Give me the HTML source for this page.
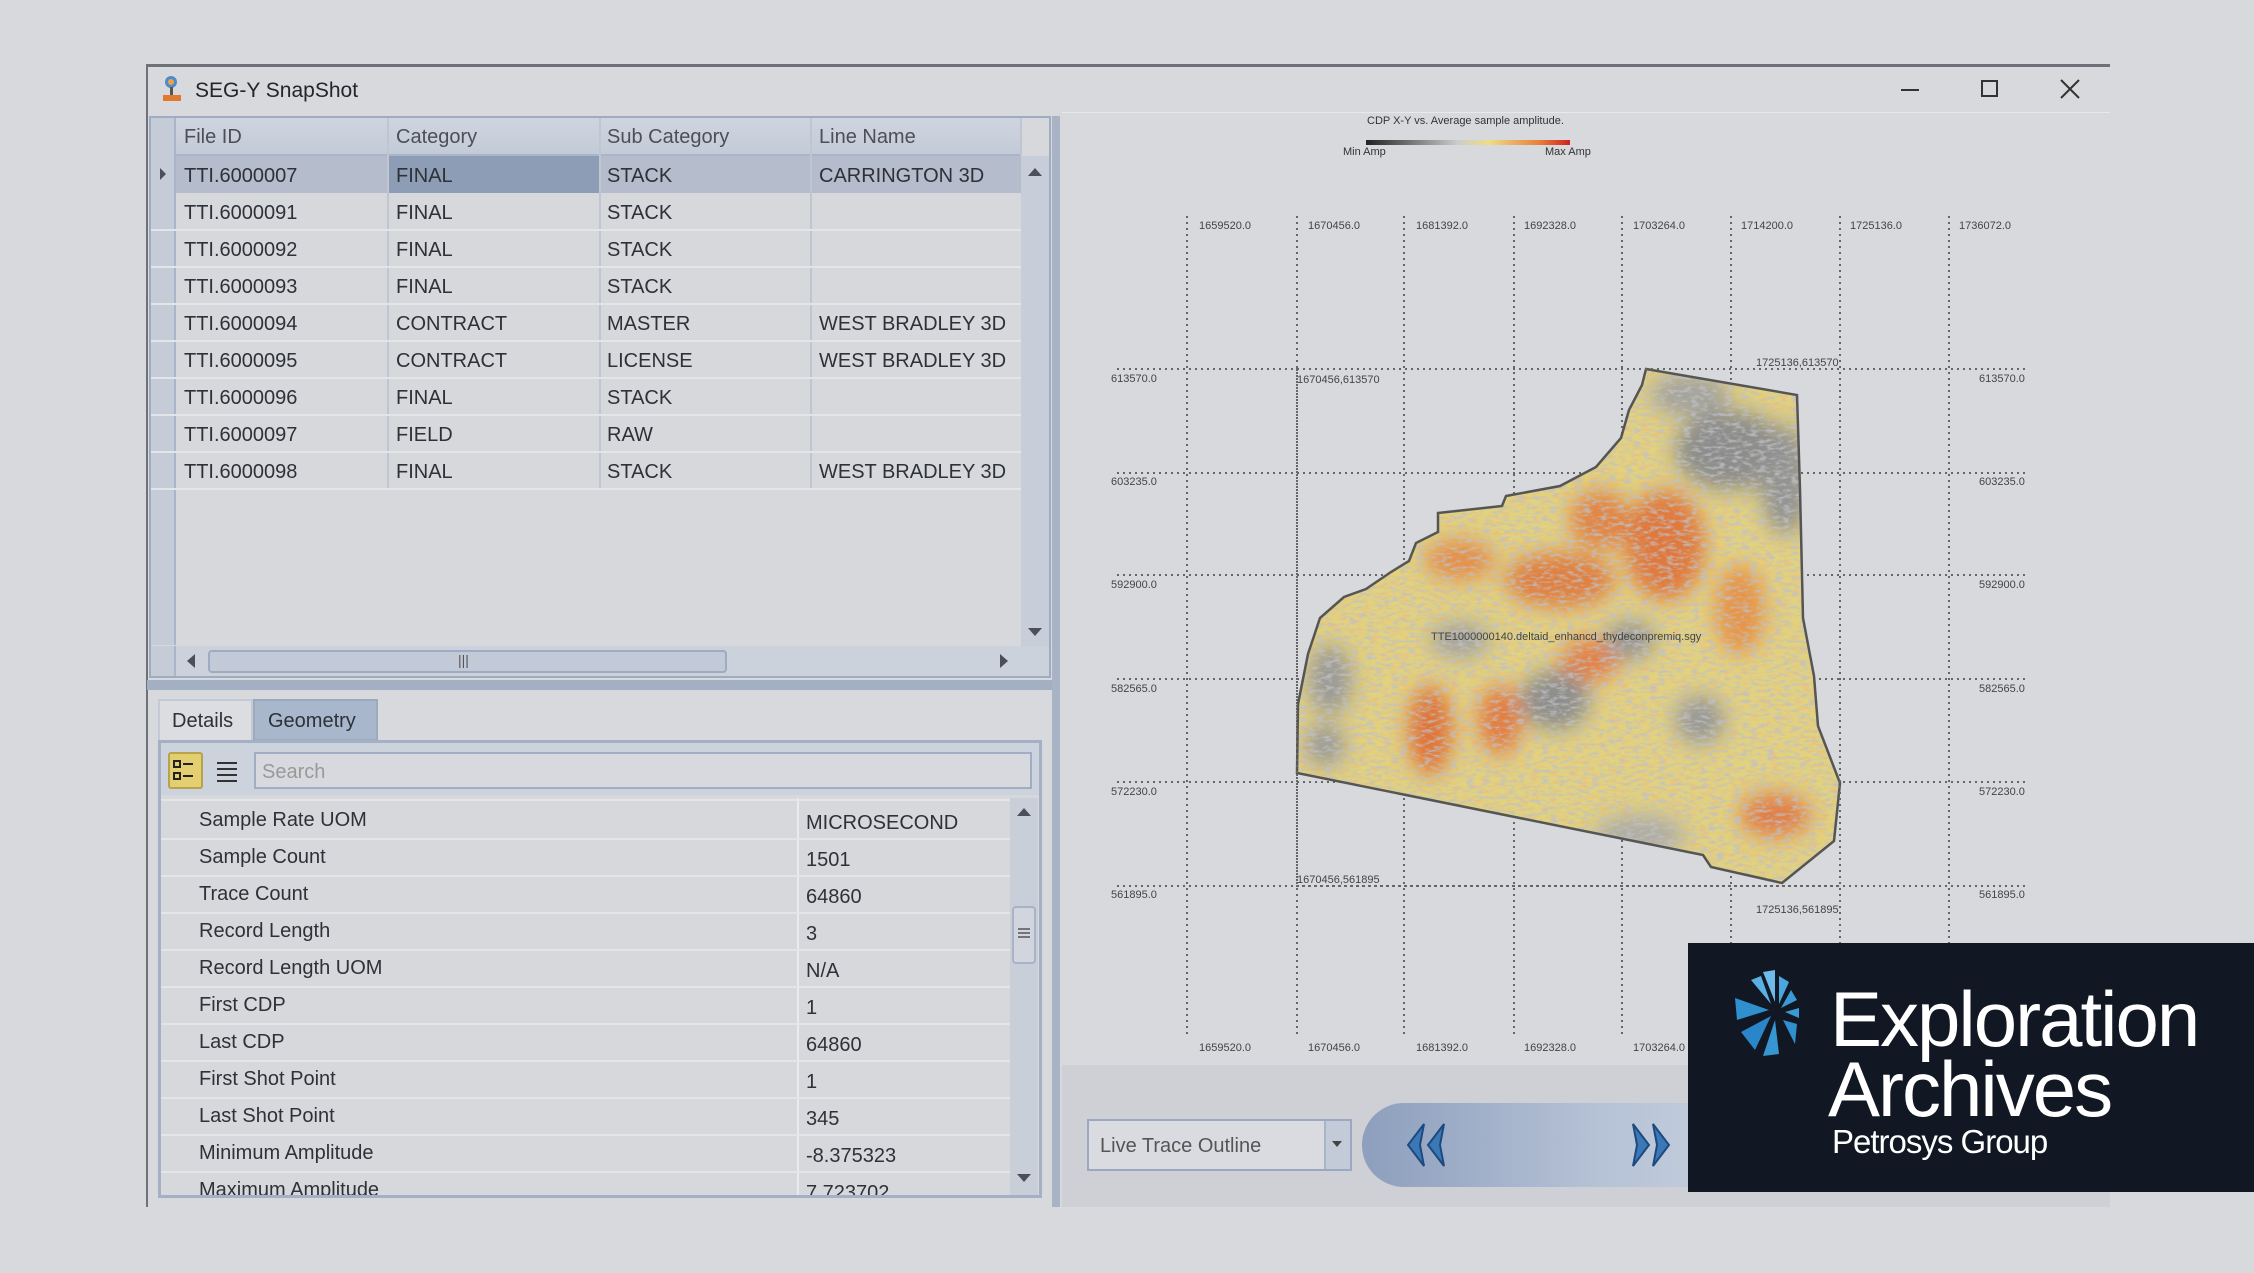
<!DOCTYPE html>
<html><head><meta charset="utf-8">
<style>
*{margin:0;padding:0;box-sizing:border-box}
body{width:2254px;height:1273px;background:#d8d9dc;position:relative;overflow:hidden;font-family:"Liberation Sans",sans-serif;color:#2e3138}
.a{position:absolute}
.t{position:absolute;font-size:20px;white-space:nowrap;line-height:1}
.hl{position:absolute;height:2px;background:#e4e5e8}
.vl{position:absolute;width:2px;background:#c0c6d1}
</style></head><body>

<div class="a" style="left:147px;top:64px;width:1963px;height:3px;background:#6e7178"></div>
<div class="a" style="left:146px;top:64px;width:2px;height:1143px;background:#6e7178"></div>
<div class="a" style="left:1062px;top:112px;width:1048px;height:1px;background:#e8e9ec"></div>

<svg class="a" style="left:160px;top:74px" width="24" height="30" viewBox="0 0 24 30">
<circle cx="11" cy="8" r="6" fill="#4b8ccb"/><circle cx="11" cy="8" r="3" fill="#f0a040"/>
<rect x="10" y="13" width="3" height="8" fill="#555"/><rect x="3" y="21" width="18" height="6" fill="#e07a30"/>
</svg>
<div class="t" style="left:195px;top:80px;font-size:21px;color:#23252a">SEG-Y SnapShot</div>

<div class="a" style="left:1901px;top:89px;width:18px;height:2px;background:#333"></div>
<div class="a" style="left:1981px;top:80px;width:17px;height:17px;border:2px solid #333"></div>
<svg class="a" style="left:2060px;top:79px" width="20" height="20"><path d="M1 1L19 19M19 1L1 19" stroke="#333" stroke-width="2"/></svg>

<div class="a" style="left:149px;top:116px;width:902px;height:562px;border:2px solid #9eabc0;background:#d7d8dc"></div>
<div class="a" style="left:151px;top:118px;width:870px;height:38px;background:linear-gradient(#cfd5df,#c3cbd8);border-bottom:2px solid #a9b5c8"></div>
<div class="a" style="left:151px;top:118px;width:25px;height:527px;background:#c5ccd8;border-right:2px solid #a9b5c8"></div>
<div class="a" style="left:176px;top:156px;width:845px;height:37px;background:#b5bccb"></div>
<div class="a" style="left:388px;top:156px;width:212px;height:37px;background:#8e9db6"></div>
<svg class="a" style="left:158px;top:166px" width="10" height="16"><path d="M2 2L8 8L2 14Z" fill="#4a4f59"/></svg>
<div class="vl" style="left:387px;top:118px;height:372px"></div>
<div class="vl" style="left:599px;top:118px;height:372px"></div>
<div class="vl" style="left:810px;top:118px;height:372px"></div>
<div class="vl" style="left:1020px;top:118px;height:38px"></div>
<div class="hl" style="left:151px;top:229px;width:870px"></div>
<div class="hl" style="left:151px;top:266px;width:870px"></div>
<div class="hl" style="left:151px;top:303px;width:870px"></div>
<div class="hl" style="left:151px;top:340px;width:870px"></div>
<div class="hl" style="left:151px;top:377px;width:870px"></div>
<div class="hl" style="left:151px;top:414px;width:870px"></div>
<div class="hl" style="left:151px;top:451px;width:870px"></div>
<div class="hl" style="left:151px;top:488px;width:870px"></div>
<div class="t" style="left:184px;top:127px;color:#4b4f57">File ID</div>
<div class="t" style="left:396px;top:127px;color:#4b4f57">Category</div>
<div class="t" style="left:607px;top:127px;color:#4b4f57">Sub Category</div>
<div class="t" style="left:819px;top:127px;color:#4b4f57">Line Name</div>

<div class="t" style="left:184px;top:166px">TTI.6000007</div><div class="t" style="left:396px;top:166px">FINAL</div><div class="t" style="left:607px;top:166px">STACK</div><div class="t" style="left:819px;top:166px">CARRINGTON 3D</div>
<div class="t" style="left:184px;top:203px">TTI.6000091</div><div class="t" style="left:396px;top:203px">FINAL</div><div class="t" style="left:607px;top:203px">STACK</div>
<div class="t" style="left:184px;top:240px">TTI.6000092</div><div class="t" style="left:396px;top:240px">FINAL</div><div class="t" style="left:607px;top:240px">STACK</div>
<div class="t" style="left:184px;top:277px">TTI.6000093</div><div class="t" style="left:396px;top:277px">FINAL</div><div class="t" style="left:607px;top:277px">STACK</div>
<div class="t" style="left:184px;top:314px">TTI.6000094</div><div class="t" style="left:396px;top:314px">CONTRACT</div><div class="t" style="left:607px;top:314px">MASTER</div><div class="t" style="left:819px;top:314px">WEST BRADLEY 3D</div>
<div class="t" style="left:184px;top:351px">TTI.6000095</div><div class="t" style="left:396px;top:351px">CONTRACT</div><div class="t" style="left:607px;top:351px">LICENSE</div><div class="t" style="left:819px;top:351px">WEST BRADLEY 3D</div>
<div class="t" style="left:184px;top:388px">TTI.6000096</div><div class="t" style="left:396px;top:388px">FINAL</div><div class="t" style="left:607px;top:388px">STACK</div>
<div class="t" style="left:184px;top:425px">TTI.6000097</div><div class="t" style="left:396px;top:425px">FIELD</div><div class="t" style="left:607px;top:425px">RAW</div>
<div class="t" style="left:184px;top:462px">TTI.6000098</div><div class="t" style="left:396px;top:462px">FINAL</div><div class="t" style="left:607px;top:462px">STACK</div><div class="t" style="left:819px;top:462px">WEST BRADLEY 3D</div>

<div class="a" style="left:1021px;top:156px;width:28px;height:490px;background:#c8ced9"></div>
<svg class="a" style="left:1027px;top:166px" width="16" height="12"><path d="M1 10L8 2L15 10Z" fill="#4a4f59"/></svg>
<svg class="a" style="left:1027px;top:626px" width="16" height="12"><path d="M1 2L8 10L15 2Z" fill="#4a4f59"/></svg>
<div class="a" style="left:151px;top:646px;width:898px;height:30px;background:#ccd2dc"></div>
<div class="a" style="left:151px;top:646px;width:25px;height:30px;background:#c5ccd8;border-right:2px solid #a9b5c8"></div>
<div class="a" style="left:208px;top:650px;width:519px;height:23px;background:#c2cad8;border:2px solid #9eabc0;border-radius:4px"></div>
<div class="t" style="left:458px;top:653px;font-size:14px;color:#555">|||</div>
<svg class="a" style="left:185px;top:653px" width="12" height="16"><path d="M10 1L2 8L10 15Z" fill="#4a4f59"/></svg>
<svg class="a" style="left:998px;top:653px" width="12" height="16"><path d="M2 1L10 8L2 15Z" fill="#4a4f59"/></svg>

<div class="a" style="left:147px;top:680px;width:906px;height:10px;background:#a3afc3"></div>
<div class="a" style="left:1052px;top:116px;width:8px;height:1091px;background:#a8b3c6"></div>

<div class="a" style="left:158px;top:699px;width:95px;height:43px;background:#dcdde0;border:2px solid #c4cad5;border-bottom:none"></div>
<div class="t" style="left:172px;top:711px">Details</div>
<div class="a" style="left:253px;top:699px;width:125px;height:42px;background:#a9b7cd;border:2px solid #9caac0"></div>
<div class="t" style="left:268px;top:711px">Geometry</div>

<div class="a" style="left:158px;top:740px;width:884px;height:458px;border:3px solid #a3b0c5;background:#d7d8dc"></div>
<div class="a" style="left:161px;top:743px;width:878px;height:52px;background:#cdd3dd"></div>
<div class="a" style="left:168px;top:752px;width:35px;height:37px;background:#e3cf6f;border:2px solid #b8a24c;border-radius:3px"></div>
<svg class="a" style="left:173px;top:759px" width="25" height="24"><rect x="1" y="2" width="6" height="6" fill="none" stroke="#222" stroke-width="2"/><rect x="1" y="14" width="6" height="6" fill="none" stroke="#222" stroke-width="2"/><path d="M10 5H20M10 17H20" stroke="#222" stroke-width="2"/></svg>
<svg class="a" style="left:215px;top:760px" width="24" height="22"><path d="M2 3H22M2 9H22M2 15H22M2 21H22" stroke="#333" stroke-width="2"/></svg>
<div class="a" style="left:254px;top:752px;width:778px;height:37px;background:#d7d9de;border:2px solid #a0adc2"></div>
<div class="t" style="left:262px;top:762px;color:#999">Search</div>

<div class="a" style="left:161px;top:795px;width:849px;height:400px;background:#d7d8dc"></div>
<div class="a" style="left:797px;top:798px;width:2px;height:397px;background:#eaebee"></div>
<div class="hl" style="left:161px;top:799px;width:849px"></div>
<div class="hl" style="left:161px;top:838px;width:849px"></div>
<div class="hl" style="left:161px;top:875px;width:849px"></div>
<div class="hl" style="left:161px;top:912px;width:849px"></div>
<div class="hl" style="left:161px;top:949px;width:849px"></div>
<div class="hl" style="left:161px;top:986px;width:849px"></div>
<div class="hl" style="left:161px;top:1023px;width:849px"></div>
<div class="hl" style="left:161px;top:1060px;width:849px"></div>
<div class="hl" style="left:161px;top:1097px;width:849px"></div>
<div class="hl" style="left:161px;top:1134px;width:849px"></div>
<div class="hl" style="left:161px;top:1171px;width:849px"></div>
<div class="t" style="left:199px;top:810px">Sample Rate UOM</div><div class="t" style="left:806px;top:813px">MICROSECOND</div>
<div class="t" style="left:199px;top:847px">Sample Count</div><div class="t" style="left:806px;top:850px">1501</div>
<div class="t" style="left:199px;top:884px">Trace Count</div><div class="t" style="left:806px;top:887px">64860</div>
<div class="t" style="left:199px;top:921px">Record Length</div><div class="t" style="left:806px;top:924px">3</div>
<div class="t" style="left:199px;top:958px">Record Length UOM</div><div class="t" style="left:806px;top:961px">N/A</div>
<div class="t" style="left:199px;top:995px">First CDP</div><div class="t" style="left:806px;top:998px">1</div>
<div class="t" style="left:199px;top:1032px">Last CDP</div><div class="t" style="left:806px;top:1035px">64860</div>
<div class="t" style="left:199px;top:1069px">First Shot Point</div><div class="t" style="left:806px;top:1072px">1</div>
<div class="t" style="left:199px;top:1106px">Last Shot Point</div><div class="t" style="left:806px;top:1109px">345</div>
<div class="t" style="left:199px;top:1143px">Minimum Amplitude</div><div class="t" style="left:806px;top:1146px">-8.375323</div>
<div class="a" style="left:161px;top:1176px;width:849px;height:19px;overflow:hidden"><div class="t" style="left:38px;top:4px">Maximum Amplitude</div><div class="t" style="left:645px;top:7px">7.723702</div></div>
<div class="a" style="left:1010px;top:798px;width:28px;height:397px;background:#c9cfd9"></div>
<svg class="a" style="left:1016px;top:806px" width="16" height="12"><path d="M1 10L8 2L15 10Z" fill="#4a4f59"/></svg>
<svg class="a" style="left:1016px;top:1172px" width="16" height="12"><path d="M1 2L8 10L15 2Z" fill="#4a4f59"/></svg>
<div class="a" style="left:1012px;top:906px;width:24px;height:58px;background:#d0d5de;border:2px solid #a8b3c6;border-radius:4px"></div>
<svg class="a" style="left:1017px;top:927px" width="14" height="14"><path d="M1 2H13M1 6H13M1 10H13" stroke="#555" stroke-width="1.5"/></svg>

<svg class="a" style="left:0;top:0" width="2254" height="1273">
<defs>
<linearGradient id="lg" x1="0" x2="1"><stop offset="0" stop-color="#222"/><stop offset=".45" stop-color="#ccc"/><stop offset=".6" stop-color="#eedd88"/><stop offset=".85" stop-color="#e8803a"/><stop offset="1" stop-color="#d02020"/></linearGradient>
<clipPath id="cp"><polygon id="pg" points="1646,369 1797,395 1800,489 1803,618 1814,676 1818,726 1840,783 1834,841 1782,883 1711,867 1703,855 1297,773 1298,704 1308,654 1320,618 1344,597 1366,589 1391,572 1409,561 1416,543 1438,532 1438,513 1502,506 1506,496 1560,486 1596,467 1621,438 1629,410 1642,385"/></clipPath>
<filter id="bl"><feGaussianBlur stdDeviation="10"/></filter>
<filter id="nz" x="0" y="0" width="100%" height="100%"><feTurbulence type="fractalNoise" baseFrequency="0.12 0.3" numOctaves="3" seed="5"/><feColorMatrix values="0 0 0 0 0.52  0 0 0 0 0.53  0 0 0 0 0.57  3.2 0 0 0 -1.45"/></filter>
<filter id="nz2" x="0" y="0" width="100%" height="100%"><feTurbulence type="fractalNoise" baseFrequency="0.1 0.28" numOctaves="3" seed="11"/><feColorMatrix values="0 0 0 0 0.9  0 0 0 0 0.45  0 0 0 0 0.2  3 0 0 0 -1.5"/></filter>
</defs>
<text x="1367" y="124" font-size="11" fill="#333">CDP X-Y vs. Average sample amplitude.</text>
<rect x="1366" y="140" width="204" height="5" fill="url(#lg)"/>
<text x="1343" y="155" font-size="11" fill="#333">Min Amp</text>
<text x="1545" y="155" font-size="11" fill="#333">Max Amp</text>
<g stroke="#666" stroke-width="2" stroke-dasharray="2 4" fill="none">
<path d="M1187 216V1037M1297 216V1037M1404 216V1037M1514 216V1037M1622 216V1037M1731 216V1037M1840 216V1037M1949 216V1037"/>
<path d="M1117 369H2027M1117 473H2027M1117 575H2027M1117 679H2027M1117 782H2027M1117 886H2027"/>
</g>
<g font-size="11" fill="#444">
<text x="1199" y="229">1659520.0</text><text x="1308" y="229">1670456.0</text><text x="1416" y="229">1681392.0</text><text x="1524" y="229">1692328.0</text><text x="1633" y="229">1703264.0</text><text x="1741" y="229">1714200.0</text><text x="1850" y="229">1725136.0</text><text x="1959" y="229">1736072.0</text>
<text x="1199" y="1051">1659520.0</text><text x="1308" y="1051">1670456.0</text><text x="1416" y="1051">1681392.0</text><text x="1524" y="1051">1692328.0</text><text x="1633" y="1051">1703264.0</text>
<text x="1111" y="382">613570.0</text><text x="1111" y="485">603235.0</text><text x="1111" y="588">592900.0</text><text x="1111" y="692">582565.0</text><text x="1111" y="795">572230.0</text><text x="1111" y="898">561895.0</text>
<text x="1979" y="382">613570.0</text><text x="1979" y="485">603235.0</text><text x="1979" y="588">592900.0</text><text x="1979" y="692">582565.0</text><text x="1979" y="795">572230.0</text><text x="1979" y="898">561895.0</text>
<text x="1297" y="383">1670456,613570</text><text x="1756" y="366">1725136,613570</text><text x="1297" y="883">1670456,561895</text><text x="1756" y="913">1725136,561895</text>
</g>
<g clip-path="url(#cp)">
<rect x="1290" y="360" width="560" height="530" fill="#e2d27e"/>
<rect x="1290" y="360" width="560" height="530" filter="url(#nz2)" opacity=".55"/>
<g filter="url(#bl)" opacity=".85">
<ellipse cx="1730" cy="450" rx="55" ry="40" fill="#7e828d"/>
<ellipse cx="1785" cy="480" rx="25" ry="55" fill="#858994"/>
<ellipse cx="1690" cy="395" rx="40" ry="22" fill="#9a9ca2"/>
<ellipse cx="1665" cy="545" rx="40" ry="55" fill="#e06a30"/>
<ellipse cx="1600" cy="520" rx="30" ry="30" fill="#e2783a"/>
<ellipse cx="1560" cy="580" rx="55" ry="28" fill="#e07236"/>
<ellipse cx="1430" cy="730" rx="22" ry="45" fill="#e0642c"/>
<ellipse cx="1500" cy="720" rx="22" ry="35" fill="#e46e34"/>
<ellipse cx="1590" cy="660" rx="30" ry="22" fill="#e4753a"/>
<ellipse cx="1555" cy="700" rx="35" ry="30" fill="#80838e"/>
<ellipse cx="1630" cy="640" rx="25" ry="20" fill="#8b8e98"/>
<ellipse cx="1330" cy="680" rx="22" ry="35" fill="#8e919a"/>
<ellipse cx="1325" cy="745" rx="20" ry="22" fill="#90939c"/>
<ellipse cx="1700" cy="720" rx="25" ry="25" fill="#8d909a"/>
<ellipse cx="1775" cy="815" rx="35" ry="22" fill="#e2703a"/>
<ellipse cx="1740" cy="610" rx="25" ry="45" fill="#e8893e"/>
<ellipse cx="1460" cy="560" rx="35" ry="20" fill="#e6823e"/>
<ellipse cx="1640" cy="835" rx="45" ry="20" fill="#a4a6ab"/>
<ellipse cx="1460" cy="640" rx="30" ry="18" fill="#9a9ca4"/>
</g>
<rect x="1290" y="360" width="560" height="530" filter="url(#nz)" opacity=".8"/>
</g>
<use href="#pg" fill="none" stroke="#555" stroke-width="2.5"/>
<text x="1431" y="640" font-size="11" fill="#444">TTE1000000140.deltaid_enhancd_thydeconpremiq.sgy</text>
<path d="M1297 369H1840V886H1297Z" fill="none" stroke="#666" stroke-width="2" stroke-dasharray="2 4"/>
</svg>

<div class="a" style="left:1062px;top:1065px;width:1048px;height:142px;background:#cfd0d5"></div>
<div class="a" style="left:1087px;top:1119px;width:265px;height:52px;background:#d9dbe0;border:2px solid #9aa9c1"></div>
<div class="a" style="left:1324px;top:1121px;width:26px;height:48px;background:#c3cbd8;border-left:2px solid #a8b4c7"></div>
<svg class="a" style="left:1331px;top:1140px" width="12" height="8"><path d="M1 1H11L6 7Z" fill="#444"/></svg>
<div class="t" style="left:1100px;top:1136px;color:#555">Live Trace Outline</div>
<div class="a" style="left:1362px;top:1103px;width:400px;height:84px;border-radius:42px;background:linear-gradient(90deg,#8d9fbd,#b6c2d6 60%,#c8d1df)"></div>
<svg class="a" style="left:1404px;top:1122px" width="48" height="46"><path d="M20 2L4 23L20 44L16 23Z M40 2L24 23L40 44L36 23Z" fill="#3b78b5" stroke="#1d4a7e" stroke-width="2"/></svg>
<svg class="a" style="left:1625px;top:1122px" width="48" height="46"><path d="M8 2L24 23L8 44L12 23Z M28 2L44 23L28 44L32 23Z" fill="#3b78b5" stroke="#1d4a7e" stroke-width="2"/></svg>

<div class="a" style="left:1688px;top:943px;width:566px;height:249px;background:#111823"></div>
<svg class="a" style="left:1733px;top:968px" width="84" height="92" viewBox="0 0 84 92">
<g fill="#3a9ad6">
<path d="M18 12L28 8L38 36Z" fill="#5ab0e2"/>
<path d="M30 4L42 2L42 34Z" fill="#6cbbe8"/>
<path d="M46 8L56 14L46 36Z" fill="#4aa6dc"/>
<path d="M58 22L64 32L48 40Z"/>
<path d="M2 30L36 42L4 52Z" fill="#2f8fcf"/>
<path d="M8 64L38 48L22 82Z" fill="#2a86c8"/>
<path d="M30 88L42 52L46 86Z" fill="#3696d2"/>
<path d="M50 52L64 56L62 76Z" fill="#2f8fcf"/>
<path d="M52 44L66 40L66 50Z" fill="#3a9ad6"/>
</g></svg>
<div class="t" style="left:1830px;top:980px;font-size:78px;color:#fff;letter-spacing:-2px">Exploration</div>
<div class="t" style="left:1828px;top:1050px;font-size:78px;color:#fff;letter-spacing:-2px">Archives</div>
<div class="t" style="left:1832px;top:1125px;font-size:33px;color:#fff;letter-spacing:-1px">Petrosys Group</div>
</body></html>
